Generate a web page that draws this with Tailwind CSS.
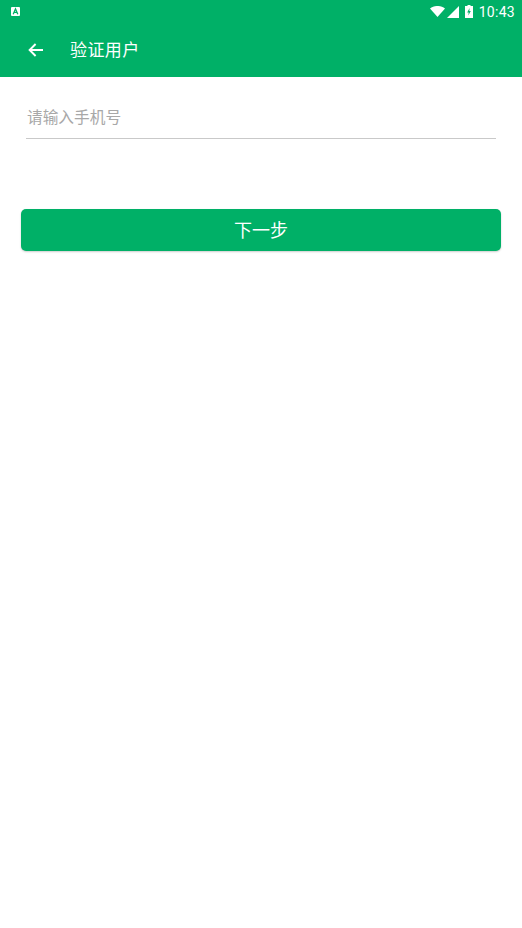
<!DOCTYPE html>
<html lang="zh">
<head>
    <meta charset="UTF-8">
    <meta name="viewport" content="width=device-width, initial-scale=1.0">
    <script src="https://cdn.jsdelivr.net/npm/@tailwindcss/browser@4"></script>
    <title>验证用户</title>
</head>
<body class="bg-white font-['Roboto','Noto_Sans_CJK_SC',sans-serif]">
    <div class="w-[522px] h-[928px] flex flex-col overflow-hidden">
        <!--header-->
        <div class="bg-[#00b067] h-[77px] shrink-0 text-white">
            <div class="h-[23px] flex items-center pl-[11px] pr-[7px]">
                <svg width="9" height="9" viewBox="0 0 9 9">
                    <rect width="9" height="9" rx="1" fill="#fff"/>
                    <path d="M2.2 7.2 L4.5 1.8 L6.8 7.2 M3.2 5.4 H5.8" fill="none" stroke="#00b067" stroke-width="1.3"/>
                </svg>
                <div class="ml-auto flex items-center">
                    <svg width="15" height="11" viewBox="0 0 15 11">
                        <path d="M0 2.6 C4 -0.9 11 -0.9 15 2.6 L7.5 11 Z" fill="#fff"/>
                    </svg>
                    <svg class="ml-[2px]" width="12" height="12" viewBox="0 0 12 12">
                        <path d="M12 0 V12 H0 Z" fill="#fff"/>
                    </svg>
                    <svg class="ml-[6px]" width="8" height="13" viewBox="0 0 8 13">
                        <path d="M2.5 0 H5.5 V1 H8 V13 H0 V1 H2.5 Z" fill="#fff"/>
                        <path d="M4.6 3 L2.2 7.4 H3.7 L3.3 10.4 L5.8 6 H4.3 Z" fill="#00b067"/>
                    </svg>
                    <span class="ml-[6px] text-[14px] leading-none tracking-[0.3px]">10:43</span>
                </div>
            </div>
            <div class="h-[54px] flex items-center pl-[28px]">
                <svg width="15" height="14" viewBox="0 0 15 14">
                    <path d="M15 7 H2 M7.6 1 L1.6 7 L7.6 13" fill="none" stroke="#fff" stroke-width="1.9"/>
                </svg>
                <span class="ml-[27px] text-[17px] leading-none tracking-[0.4px]">验证用户</span>
            </div>
        </div>
        <!--form-->
        <div class="px-[26px] pt-[32px]">
            <div class="h-[29px] pl-px text-[15.7px] leading-[18px] text-[#a8a8a8]">请输入手机号</div>
            <div class="h-px bg-[#c9c9c9]"></div>
        </div>
        <div class="px-[21px] mt-[70px]">
            <button class="w-full h-[42px] pt-[2px] rounded-[5px] bg-[#00b067] text-white text-[18px] leading-none shadow-[0_1px_2px_rgba(0,0,0,0.2)]">下一步</button>
        </div>
    </div>
</body>
</html>
